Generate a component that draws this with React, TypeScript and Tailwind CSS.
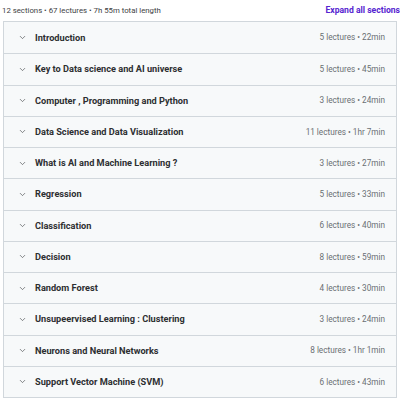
import { ChevronDown } from "lucide-react";

const SECTIONS = [
  { title: "Introduction", meta: "5 lectures • 22min" },
  { title: "Key to Data science and AI universe", meta: "5 lectures • 45min" },
  { title: "Computer , Programming and Python", meta: "3 lectures • 24min" },
  { title: "Data Science and Data Visualization", meta: "11 lectures • 1hr 7min" },
  { title: "What is AI and Machine Learning ?", meta: "3 lectures • 27min" },
  { title: "Regression", meta: "5 lectures • 33min" },
  { title: "Classification", meta: "6 lectures • 40min" },
  { title: "Decision", meta: "8 lectures • 59min" },
  { title: "Random Forest", meta: "4 lectures • 30min" },
  { title: "Unsupeervised Learning : Clustering", meta: "3 lectures • 24min" },
  { title: "Neurons and Neural Networks", meta: "8 lectures • 1hr 1min" },
  { title: "Support Vector Machine (SVM)", meta: "6 lectures • 43min" },
];

export default function App() {
  return (
    <div className="h-[399px] w-[400px] overflow-hidden bg-white px-[3px] font-['Roboto',sans-serif]">
      {/* Summary */}
      <div className="-ml-[1px] -mr-[3px] flex h-[21px] items-center justify-between">
        <span className="text-[7.8px] text-[#3e4143]">12 sections • 67 lectures • 7h 55m total length</span>
        <span className="text-[8.6px] font-bold text-[#5624d0]">Expand all sections</span>
      </div>

      {/* Curriculum list */}
      <div className="border border-[#d1d7dc]">
        {SECTIONS.map((s, i) => (
          <div
            key={s.title}
            className={`flex h-[31.25px] items-center bg-[#f7f9fa] pl-[14px] pr-[11px] ${i === 0 ? "" : "border-t border-[#d1d7dc]"}`}
          >
            <ChevronDown size={9} strokeWidth={1.8} className="shrink-0 text-[#4a4d50]" />
            <span className="ml-[8px] flex-1 text-[9.2px] font-bold text-[#2d2f31]">{s.title}</span>
            <span className="text-[8.2px] text-[#6a6f73]">{s.meta}</span>
          </div>
        ))}
      </div>
    </div>
  );
}
